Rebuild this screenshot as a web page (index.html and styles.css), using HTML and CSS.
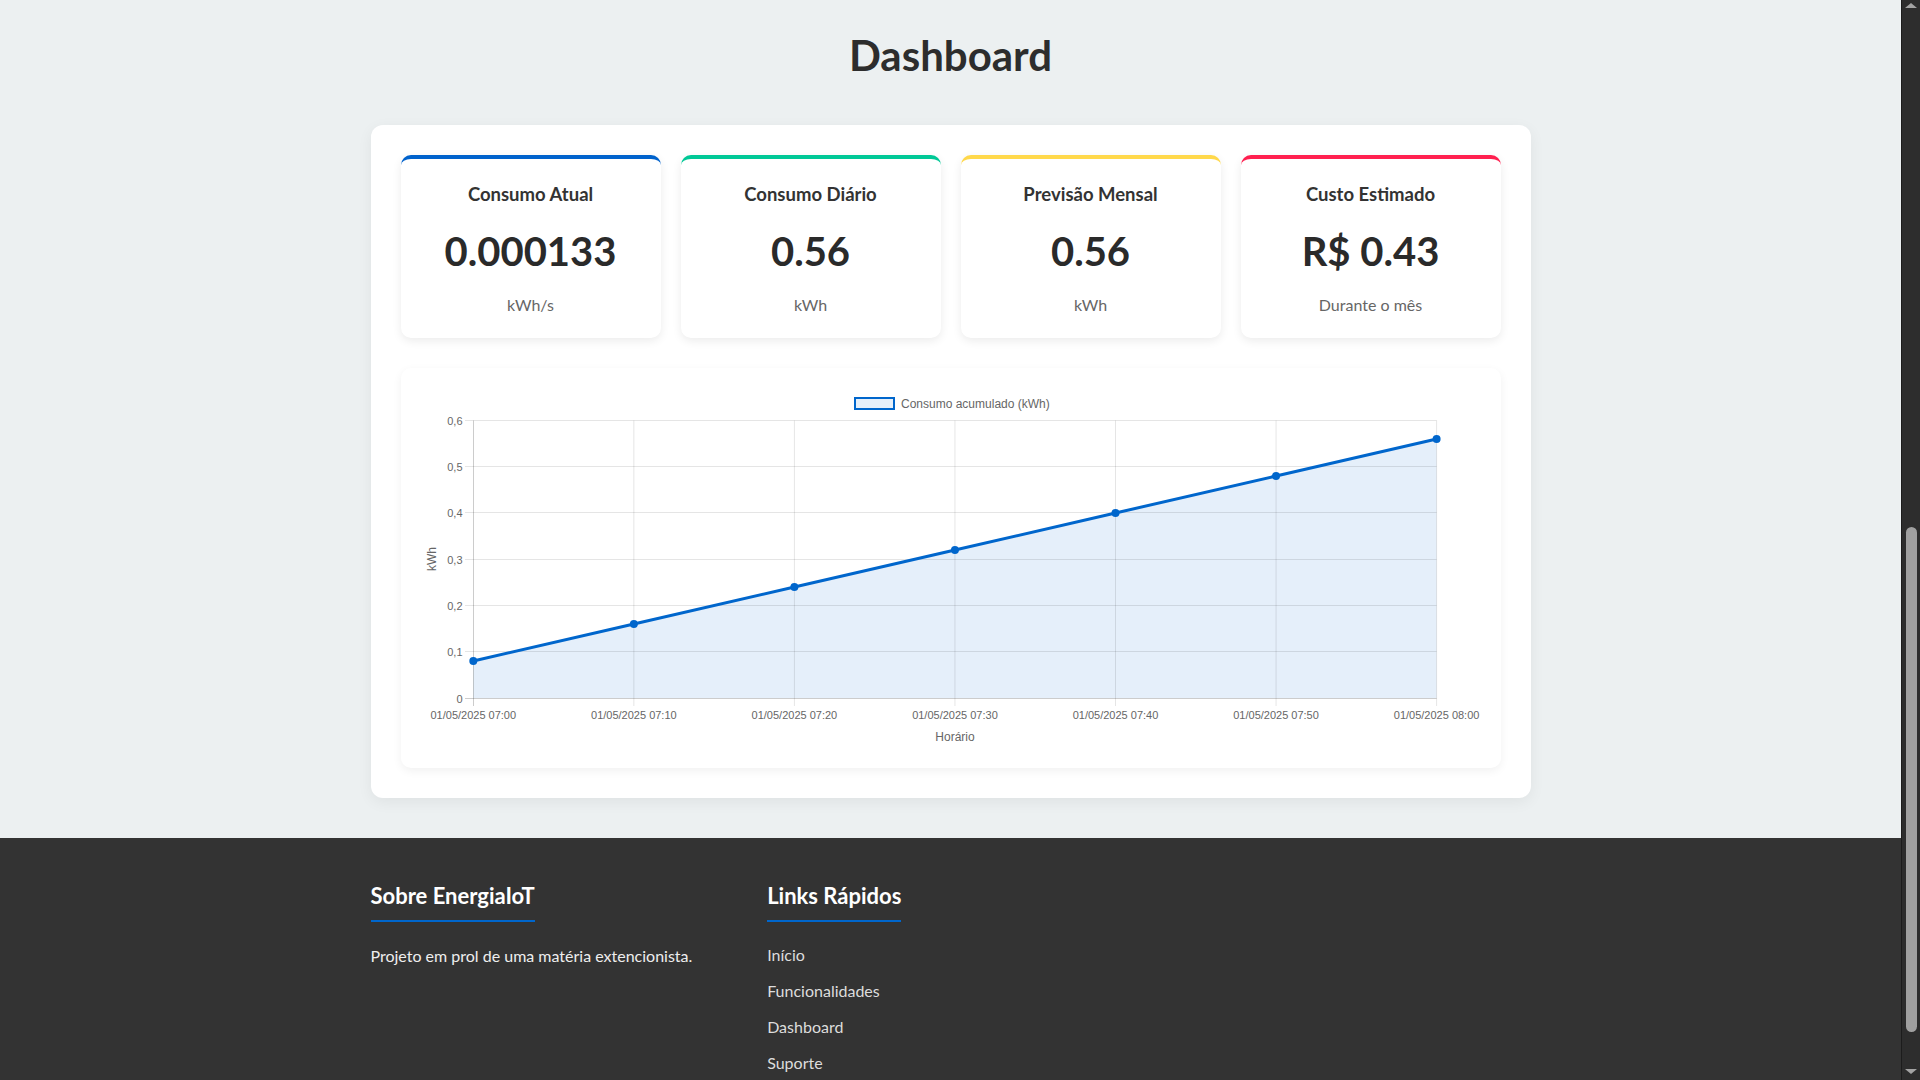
FILE: index.html
```html
<!DOCTYPE html>
<html lang="pt-BR">
<head>
<meta charset="utf-8">
<title>Dashboard - EnergiaIoT</title>
<link rel="stylesheet" href="styles.css">
</head>
<body>
<div class="viewport">
<div class="page">
<main class="dashboard-section">
  <h1 class="section-title">Dashboard</h1>
  <div class="dashboard-container">
    <div class="stats-grid">
      <div class="stat-card stat-blue">
        <h3 class="stat-title">Consumo Atual</h3>
        <div class="stat-value">0.000133</div>
        <div class="stat-unit">kWh/s</div>
      </div>
      <div class="stat-card stat-green">
        <h3 class="stat-title">Consumo Diário</h3>
        <div class="stat-value">0.56</div>
        <div class="stat-unit">kWh</div>
      </div>
      <div class="stat-card stat-yellow">
        <h3 class="stat-title">Previsão Mensal</h3>
        <div class="stat-value">0.56</div>
        <div class="stat-unit">kWh</div>
      </div>
      <div class="stat-card stat-red">
        <h3 class="stat-title">Custo Estimado</h3>
        <div class="stat-value">R$ 0.43</div>
        <div class="stat-unit">Durante o mês</div>
      </div>
    </div>
    <div class="chart-card">
      <svg class="chart" width="1060" height="360" viewBox="0 0 1060 360">
        <!-- legend -->
        <rect x="434" y="11" width="39" height="11" fill="#e6f0fa" stroke="#0066cc" stroke-width="2"/>
        <text class="legend-text" x="480" y="20.5">Consumo acumulado (kWh)</text>

        <!-- area fill -->
        <path d="M52.3 274 L212.85 237 L373.4 200 L533.95 163 L694.5 126 L855.05 89 L1015.6 52 L1015.6 311 L52.3 311 Z" fill="rgba(0,102,204,0.1)"/>

        <!-- horizontal grid -->
        <g stroke="rgba(0,0,0,0.1)" stroke-width="1">
          <line x1="44" y1="33.5" x2="1015.6" y2="33.5"/>
          <line x1="44" y1="79.5" x2="1015.6" y2="79.5"/>
          <line x1="44" y1="125.5" x2="1015.6" y2="125.5"/>
          <line x1="44" y1="172.5" x2="1015.6" y2="172.5"/>
          <line x1="44" y1="218.5" x2="1015.6" y2="218.5"/>
          <line x1="44" y1="264.5" x2="1015.6" y2="264.5"/>
        </g>
        <!-- vertical grid -->
        <g stroke="rgba(0,0,0,0.1)" stroke-width="1">
          <line x1="212.85" y1="33.5" x2="212.85" y2="319"/>
          <line x1="373.4" y1="33.5" x2="373.4" y2="319"/>
          <line x1="533.95" y1="33.5" x2="533.95" y2="319"/>
          <line x1="694.5" y1="33.5" x2="694.5" y2="319"/>
          <line x1="855.05" y1="33.5" x2="855.05" y2="319"/>
          <line x1="1015.6" y1="33.5" x2="1015.6" y2="319"/>
        </g>
        <!-- axes -->
        <g stroke="rgba(0,0,0,0.2)" stroke-width="1">
          <line x1="52.5" y1="33.5" x2="52.5" y2="319"/>
          <line x1="44" y1="311.5" x2="1015.6" y2="311.5"/>
        </g>

        <!-- line -->
        <polyline points="52.3,274 212.85,237 373.4,200 533.95,163 694.5,126 855.05,89 1015.6,52" fill="none" stroke="#0066cc" stroke-width="3" stroke-linejoin="round"/>
        <g fill="#0066cc">
          <circle cx="52.3" cy="274" r="4"/>
          <circle cx="212.85" cy="237" r="4"/>
          <circle cx="373.4" cy="200" r="4"/>
          <circle cx="533.95" cy="163" r="4"/>
          <circle cx="694.5" cy="126" r="4"/>
          <circle cx="855.05" cy="89" r="4"/>
          <circle cx="1015.6" cy="52" r="4"/>
        </g>

        <!-- y ticks -->
        <g class="tick-text" text-anchor="end">
          <text x="41.5" y="37.5">0,6</text>
          <text x="41.5" y="83.5">0,5</text>
          <text x="41.5" y="129.5">0,4</text>
          <text x="41.5" y="176.5">0,3</text>
          <text x="41.5" y="222.5">0,2</text>
          <text x="41.5" y="268.5">0,1</text>
          <text x="41.5" y="315.5">0</text>
        </g>
        <!-- x ticks -->
        <g class="tick-text" text-anchor="middle">
          <text x="52.3" y="332">01/05/2025 07:00</text>
          <text x="212.85" y="332">01/05/2025 07:10</text>
          <text x="373.4" y="332">01/05/2025 07:20</text>
          <text x="533.95" y="332">01/05/2025 07:30</text>
          <text x="694.5" y="332">01/05/2025 07:40</text>
          <text x="855.05" y="332">01/05/2025 07:50</text>
          <text x="1015.6" y="332">01/05/2025 08:00</text>
        </g>
        <!-- axis titles -->
        <text class="axis-title" x="534" y="353.5" text-anchor="middle">Horário</text>
        <text class="axis-title" transform="translate(15 172) rotate(-90)" text-anchor="middle">kWh</text>
      </svg>
    </div>
  </div>
</main>
<footer class="site-footer">
  <div class="footer-inner">
    <div class="footer-col">
      <h3 class="footer-heading">Sobre EnergiaIoT</h3>
      <p class="footer-text">Projeto em prol de uma matéria extencionista.</p>
    </div>
    <div class="footer-col">
      <h3 class="footer-heading">Links Rápidos</h3>
      <ul class="footer-links">
        <li><a href="#inicio">Início</a></li>
        <li><a href="#funcionalidades">Funcionalidades</a></li>
        <li><a href="#dashboard">Dashboard</a></li>
        <li><a href="#suporte">Suporte</a></li>
      </ul>
    </div>
    <div class="footer-col"></div>
  </div>
</footer>
</div>
<div class="scrollbar" aria-hidden="true">
  <span class="sb-arrow sb-up"></span>
  <span class="sb-track"><span class="sb-thumb"></span></span>
  <span class="sb-arrow sb-down"></span>
</div>
</div>
</body>
</html>
```

FILE: styles.css
```css
* {
  box-sizing: border-box;
}
body {
  margin: 0;
  overflow: hidden;
  background: #ecf0f1;
  font-family: Lato, "Open Sans", Arial, sans-serif;
  color: #333;
}

.viewport {
  display: flex;
  height: 100vh;
}
.page {
  flex: 1;
  min-width: 0;
  overflow: hidden;
  display: flex;
  flex-direction: column;
}

/* browser scrollbar as seen in the capture */
.scrollbar {
  flex: none;
  width: 19px;
  background: #2d2d2d;
  border-left: 1px solid #1c1c1c;
  display: flex;
  flex-direction: column;
  align-items: center;
}
.sb-arrow {
  width: 0;
  height: 0;
  border-left: 6px solid transparent;
  border-right: 6px solid transparent;
}
.sb-up {
  margin-top: 3px;
  border-bottom: 5px solid #a3a3a3;
}
.sb-down {
  margin: 3px 0 6px;
  border-top: 5px solid #a3a3a3;
}
.sb-track {
  flex: 1;
  display: flex;
  flex-direction: column;
  justify-content: flex-end;
  align-items: center;
  width: 100%;
  padding-bottom: 34px;
}
.sb-thumb {
  width: 11px;
  height: 505px;
  border-radius: 6px;
  background: #a0a0a0;
}

.dashboard-section {
  flex: none;
  padding: 31px 20px 40px;
}
.section-title {
  margin: 0 0 46px;
  text-align: center;
  font-size: 42px;
  line-height: 48px;
  font-weight: 700;
  color: #2d2d2d;
}
.dashboard-container {
  max-width: 1160px;
  margin: 0 auto;
  background: #fff;
  border-radius: 12px;
  padding: 30px;
  box-shadow: 0 4px 15px rgba(0, 0, 0, 0.06);
}

.stats-grid {
  display: grid;
  grid-template-columns: repeat(4, 1fr);
  gap: 20px;
}
.stat-card {
  background: #fff;
  border-radius: 10px;
  border-top: 4px solid #0066cc;
  padding: 23px 20px 22px;
  text-align: center;
  box-shadow: 0 3px 10px rgba(0, 0, 0, 0.08);
}
.stat-blue { border-top-color: #0062cc; }
.stat-green { border-top-color: #00c896; }
.stat-yellow { border-top-color: #ffd84a; }
.stat-red { border-top-color: #ff1f4f; }

.stat-title {
  margin: 0;
  font-size: 18.5px;
  line-height: 24px;
  font-weight: 700;
  color: #333;
}
.stat-value {
  margin-top: 21px;
  font-size: 40px;
  line-height: 48px;
  font-weight: 700;
  color: #2a2a2a;
}
.stat-unit {
  margin-top: 19px;
  font-size: 16px;
  line-height: 22px;
  color: #666;
}

.chart-card {
  margin-top: 30px;
  background: #fff;
  border-radius: 10px;
  padding: 19px 20px 21px;
  box-shadow: 0 3px 10px rgba(0, 0, 0, 0.06);
}
.chart {
  display: block;
  overflow: visible;
}
.legend-text,
.tick-text,
.axis-title {
  font-family: "Liberation Sans", Arial, sans-serif;
  fill: #666;
}
.legend-text { font-size: 12px; }
.tick-text { font-size: 11px; }
.axis-title { font-size: 12px; }

.site-footer {
  flex: 1 0 auto;
  background: #333;
  color: #ddd;
  padding: 46px 20px 0;
}
.footer-inner {
  max-width: 1160px;
  margin: 0 auto;
  display: grid;
  grid-template-columns: repeat(3, 1fr);
  gap: 30px;
}
.footer-heading {
  display: inline-block;
  margin: 0 0 21px;
  padding-bottom: 12px;
  border-bottom: 2px solid #0066cc;
  font-size: 22px;
  line-height: 24px;
  font-weight: 700;
  color: #fff;
}
.footer-text {
  margin: 0;
  padding-top: 1px;
  font-size: 16px;
  line-height: 24px;
  color: #eee;
}
.footer-links {
  list-style: none;
  margin: 0;
  padding: 0;
}
.footer-links li {
  margin-bottom: 12px;
  font-size: 16px;
  line-height: 24px;
}
.footer-links li:last-child {
  margin-bottom: 0;
}
.footer-links a {
  color: #ddd;
  text-decoration: none;
}
```
